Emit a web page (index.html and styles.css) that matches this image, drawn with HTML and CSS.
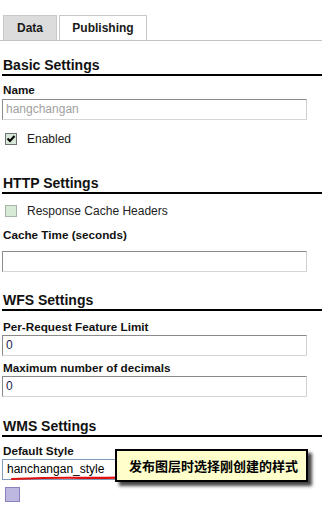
FILE: index.html
```html
<!DOCTYPE html>
<html>

<head>
    <title>Layer - Publishing</title>
    <meta name="viewport" content="width=device-width, initial-scale=1" />
    <link rel="stylesheet" href="styles.css">
</head>

<body>
    <div class="tabs">
        <div class="tab tab-off">Data</div>
        <div class="tab tab-on">Publishing</div>
    </div>

    <div class="content">
        <h2 class="sect first">Basic Settings</h2>
        <div class="label lbl-name">Name</div>
        <div class="field field-top3 muted">hangchangan</div>
        <div class="check-row row-enabled">
            <span class="box"><svg width="10" height="10" viewBox="0 0 10 10"><path d="M1.5 4.5 L4 7 L8.5 2" fill="none" stroke="#000" stroke-width="2"/></svg></span>
            <span>Enabled</span>
        </div>

        <h2 class="sect sect-http">HTTP Settings</h2>
        <div class="check-row row-cache">
            <span class="box box-off"></span>
            <span>Response Cache Headers</span>
        </div>
        <div class="label lbl-cache">Cache Time (seconds)</div>
        <div class="field field-cache"></div>

        <h2 class="sect sect-wfs">WFS Settings</h2>
        <div class="label lbl-wfs">Per-Request Feature Limit</div>
        <div class="field field-top2">0</div>
        <div class="label lbl-dec">Maximum number of decimals</div>
        <div class="field field-top2">0</div>

        <h2 class="sect sect-wms">WMS Settings</h2>
        <div class="label lbl-style">Default Style</div>
        <div class="style-row">
            <div class="select">hanchangan_style</div>
            <svg class="scribble" width="120" height="6" viewBox="0 0 120 6">
                <path d="M2 4 Q40 2.5 70 2.8 T118 2.4" fill="none" stroke="#e01010" stroke-width="2.2" stroke-linecap="round"/>
            </svg>
            <div class="note">发布图层时选择刚创建的样式</div>
        </div>
        <div class="swatch"></div>
    </div>
</body>

</html>
```

FILE: styles.css
```css
html {
    font-family: "Liberation Sans", Arial, "Noto Sans CJK SC", sans-serif;
}

body {
    margin: 0;
    background-color: #fff;
    color: #111;
}

.tabs {
    height: 40px;
    display: flex;
    align-items: flex-end;
    gap: 2px;
    padding-left: 3px;
    border-bottom: 1px solid #c4c4c4;
}

.tab {
    height: 25px;
    box-sizing: border-box;
    font-size: 12px;
    font-weight: bold;
    line-height: 24px;
    text-align: center;
    border: 1px solid #c8c8c8;
    border-bottom: none;
    color: #1a1a1a;
}

.tab-off {
    width: 54px;
    background-color: #dcdcdc;
}

.tab-on {
    width: 88px;
    background-color: #fff;
}

.content {
    padding-left: 2px;
}

.sect {
    margin: 0;
    padding: 0 0 1px 1px;
    font-size: 14px;
    line-height: 16px;
    font-weight: bold;
    color: #111;
    border-bottom: 2px solid #000;
}

.first {
    margin-top: 16px;
}

.sect-http {
    margin-top: 30px;
}

.sect-wfs {
    margin-top: 20px;
}

.sect-wms {
    margin-top: 21px;
}

.label {
    font-size: 11.7px;
    line-height: 13px;
    font-weight: bold;
    color: #111;
    padding-left: 1px;
}

.lbl-name {
    margin-top: 7px;
}

.lbl-cache {
    margin-top: 11px;
}

.lbl-wfs {
    margin-top: 9px;
}

.lbl-dec {
    margin-top: 5px;
}

.lbl-style {
    margin-top: 7px;
}

.field {
    width: 305px;
    height: 21px;
    box-sizing: border-box;
    border: 1px solid;
    border-color: #8a8a8a #d0d0d0 #d6d6d6 #8a8a8a;
    font-size: 12px;
    line-height: 19px;
    padding-left: 3px;
    color: #1c1c50;
}

.field-top3 {
    margin-top: 3px;
}

.field-top2 {
    margin-top: 2px;
}

.field-cache {
    margin-top: 10px;
}

.muted {
    color: #a0a0a0;
}

.check-row {
    display: flex;
    align-items: center;
    gap: 10px;
    height: 12px;
    padding-left: 3px;
    font-size: 12px;
    line-height: 12px;
    color: #222;
}

.row-enabled {
    margin-top: 13px;
}

.row-cache {
    margin-top: 11px;
}

.box {
    width: 12px;
    height: 12px;
    box-sizing: border-box;
    border: 1px solid #707070;
    background-color: #d8e8d8;
    display: flex;
    align-items: center;
    justify-content: center;
}

.box-off {
    border-color: #a8b4a8;
    background-color: #d6ead6;
}

.style-row {
    position: relative;
    margin-top: 2px;
    height: 21px;
}

.select {
    width: 160px;
    height: 21px;
    box-sizing: border-box;
    border: 1px solid #7f9db9;
    font-size: 12px;
    line-height: 19px;
    padding-left: 4px;
    color: #000;
}

.scribble {
    position: absolute;
    left: 8px;
    top: 16px;
}

.note {
    position: absolute;
    left: 113px;
    top: -10px;
    width: 193px;
    height: 33px;
    box-sizing: border-box;
    border: 2px solid #000;
    background-color: #ffffcc;
    box-shadow: 4px 4px 3px rgba(40, 40, 40, 0.85);
    font-size: 13px;
    font-weight: bold;
    line-height: 29px;
    padding-left: 12px;
    color: #000;
    font-family: "Noto Sans CJK SC", sans-serif;
}

.swatch {
    margin: 7px 0 0 3px;
    width: 15px;
    height: 15px;
    box-sizing: border-box;
    border: 1px solid #8882c0;
    background-color: #bdb8e0;
}
```
